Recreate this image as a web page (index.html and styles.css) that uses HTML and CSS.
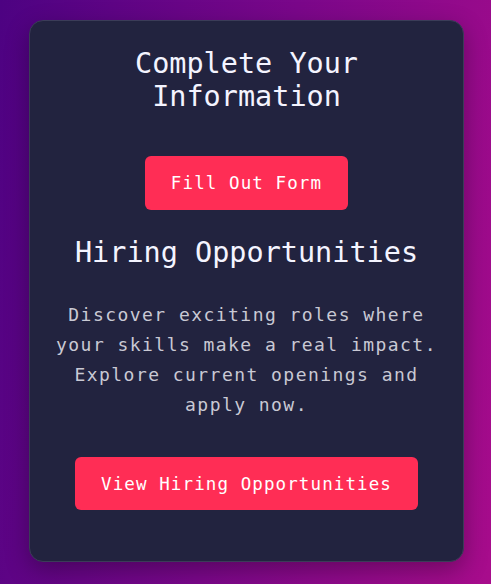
FILE: index.html
```html
<!DOCTYPE html>
<html>
<head>
<meta charset="utf-8">
<link rel="stylesheet" href="styles.css">
</head>
<body>
<div class="card">
  <h1 class="title">Complete Your Information</h1>
  <a class="btn btn-form" href="#">Fill Out Form</a>
  <h2 class="heading">Hiring Opportunities</h2>
  <p class="desc">Discover exciting roles where your skills make a real impact. Explore current openings and apply now.</p>
  <a class="btn btn-hire" href="#">View Hiring Opportunities</a>
</div>
</body>
</html>
```

FILE: styles.css
```css
html, body {
  margin: 0;
  padding: 0;
  height: 100%;
}
body {
  background: linear-gradient(100deg, #4d0282 0%, #7a078a 50%, #a80c8c 100%);
  font-family: "DejaVu Sans Mono", monospace;
  overflow: hidden;
}
.card {
  box-sizing: border-box;
  margin: 20px 0 0 29px;
  width: 435px;
  height: 542px;
  background: #22233f;
  border: 1px solid #3b3c58;
  border-radius: 14px;
  box-shadow: 0 8px 24px rgba(0,0,0,0.3);
  padding: 26px 24px 0;
  display: flex;
  flex-direction: column;
  align-items: center;
  text-align: center;
}
.title {
  margin: 0;
  font-size: 28.5px;
  line-height: 33px;
  font-weight: normal;
  color: #f4f4ff;
  width: 260px;
}
.btn {
  display: flex;
  align-items: center;
  justify-content: center;
  background: #ff2d55;
  color: #fff;
  text-decoration: none;
  border-radius: 6px;
  font-size: 17.5px;
  letter-spacing: 1.1px;
}
.btn-form {
  margin-top: 43px;
  width: 203px;
  height: 54px;
}
.heading {
  margin: 26px 0 0;
  font-size: 28.5px;
  line-height: 33px;
  font-weight: normal;
  color: #f4f4ff;
}
.desc {
  margin: 31px 0 0;
  font-size: 18px;
  line-height: 30px;
  letter-spacing: 1.45px;
  color: #c9c9d4;
}
.btn-hire {
  margin-top: 37px;
  width: 343px;
  height: 53px;
}
```
